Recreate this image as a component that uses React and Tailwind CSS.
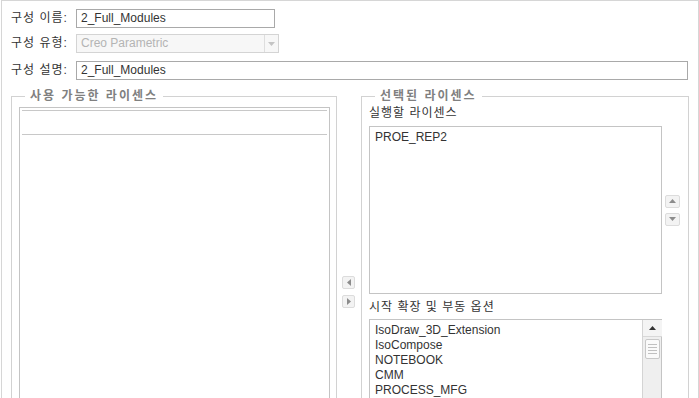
import React from 'react';

const font = "font-['Liberation_Sans','Noto_Sans_CJK_KR',sans-serif]";

// small triangle glyph for the spin / move buttons
const Tri = ({ dir = 'up', color = '#8a8a8a', w = 7, h = 4 }) => {
  const pts = {
    up: `0,${h} ${w},${h} ${w / 2},0`,
    down: `0,0 ${w},0 ${w / 2},${h}`,
    left: `${w},0 ${w},${h} 0,${h / 2}`,
    right: `0,0 0,${h} ${w},${h / 2}`,
  }[dir];
  return (
    <svg width={w} height={h} viewBox={`0 0 ${w} ${h}`}>
      <polygon points={pts} fill={color} />
    </svg>
  );
};

const SmallButton = ({ dir, w = 'w-[15px]' }) => {
  const vertical = dir === 'up' || dir === 'down';
  return (
    <div className={`${w} h-[13px] rounded-[2px] border border-[#dcdcdc] bg-[#f3f3f3] flex items-center justify-center`}>
      <Tri dir={dir} w={vertical ? 7 : 4} h={vertical ? 4 : 7} color="#8c8c8c" />
    </div>
  );
};

const FormRow = ({ label, children, className = '' }) => (
  <div className={`flex items-center h-[19px] ${className}`}>
    <div className="w-[65px] leading-[19px] text-[#333] tracking-[1px]">{label}</div>
    {children}
  </div>
);

const Legend = ({ children }) => (
  <legend className="ml-[13px] px-[5px] leading-[14px] font-bold text-[#808080] tracking-[2px]">
    {children}
  </legend>
);

const startOptions = ['IsoDraw_3D_Extension', 'IsoCompose', 'NOTEBOOK', 'CMM', 'PROCESS_MFG'];

export default function App() {
  return (
    <div className={`w-[699px] h-[398px] overflow-hidden bg-white text-[12px] text-[#333] ${font}`}>
      <div className="ml-px w-[698px] h-[520px] border-t border-l border-r border-[#d6d6d6]">
        {/* config fields */}
        <div className="pl-[9px] pt-[8px]">
          <FormRow label="구성 이름:">
            <div className="w-[199px] h-[19px] border border-[#a9a9a9] px-[4px] leading-[17px]">2_Full_Modules</div>
          </FormRow>
          <FormRow label="구성 유형:" className="mt-[6px]">
            <div className="w-[203px] h-[19px] border border-[#d4d4d4] bg-[#f7f7f7] flex">
              <div className="flex-1 px-[4px] leading-[17px] text-[#b4b4b4]">Creo Parametric</div>
              <div className="w-[14px] border-l border-[#dedede] flex items-center justify-center">
                <Tri dir="down" color="#c4c4c4" w={7} h={4} />
              </div>
            </div>
          </FormRow>
          <FormRow label="구성 설명:" className="mt-[8px]">
            <div className="w-[612px] h-[19px] border border-[#a9a9a9] px-[4px] leading-[17px]">2_Full_Modules</div>
          </FormRow>
        </div>

        {/* license group boxes */}
        <div className="flex items-start mt-[9px] ml-[9px]">
          <fieldset className="w-[326px] h-[420px] border border-[#d2d2d2]">
            <Legend>사용 가능한 라이센스</Legend>
            <div className="pl-[7px] pr-[6px] pt-[4px]">
              <div className="h-[320px] border border-[#c4c4c4] p-[2px]">
                <div className="h-[25px] border-t border-b border-[#c8c8c8]" />
              </div>
            </div>
          </fieldset>

          <div className="w-[24px] pt-[187px] pl-[5px] flex flex-col gap-[6px]">
            <SmallButton dir="left" w="w-[13px]" />
            <SmallButton dir="right" w="w-[13px]" />
          </div>

          <fieldset className="w-[328px] h-[420px] border border-[#d2d2d2]">
            <Legend>선택된 라이센스</Legend>
            <div className="pl-[7px]">
              <div className="mt-[2px] leading-[16px] tracking-[1px]">실행할 라이센스</div>
              <div className="mt-[5px] flex items-center">
                <div className="w-[293px] h-[168px] border border-[#c4c4c4] px-[5px] pt-[3px] leading-[15px]">PROE_REP2</div>
                <div className="ml-[3px] flex flex-col gap-[5px]">
                  <SmallButton dir="up" />
                  <SmallButton dir="down" />
                </div>
              </div>
              <div className="mt-[5px] leading-[16px] tracking-[1px]">시작 확장 및 부동 옵션</div>
              <div className="mt-[4px] w-[293px] h-[120px] border border-[#c4c4c4] flex">
                <div className="flex-1 pl-[5px] pt-[3px] leading-[15px]">
                  {startOptions.map((o) => (
                    <div key={o}>{o}</div>
                  ))}
                </div>
                <div className="w-[19px] bg-[#efefef] border-l border-[#d4d4d4] flex flex-col items-center">
                  <div className="w-[19px] h-[17px] bg-[#f4f4f4] border-b border-[#d8d8d8] flex items-center justify-center">
                    <Tri dir="up" color="#333" w={7} h={4} />
                  </div>
                  <div className="mt-[2px] w-[15px] h-[20px] bg-[#fafafa] border border-[#c8c8c8] rounded-[2px] flex flex-col items-center justify-center gap-[2px]">
                    <div className="w-[9px] h-px bg-[#c0c0c0]" />
                    <div className="w-[9px] h-px bg-[#c0c0c0]" />
                    <div className="w-[9px] h-px bg-[#c0c0c0]" />
                    <div className="w-[9px] h-px bg-[#c0c0c0]" />
                  </div>
                </div>
              </div>
            </div>
          </fieldset>
        </div>
      </div>
    </div>
  );
}
